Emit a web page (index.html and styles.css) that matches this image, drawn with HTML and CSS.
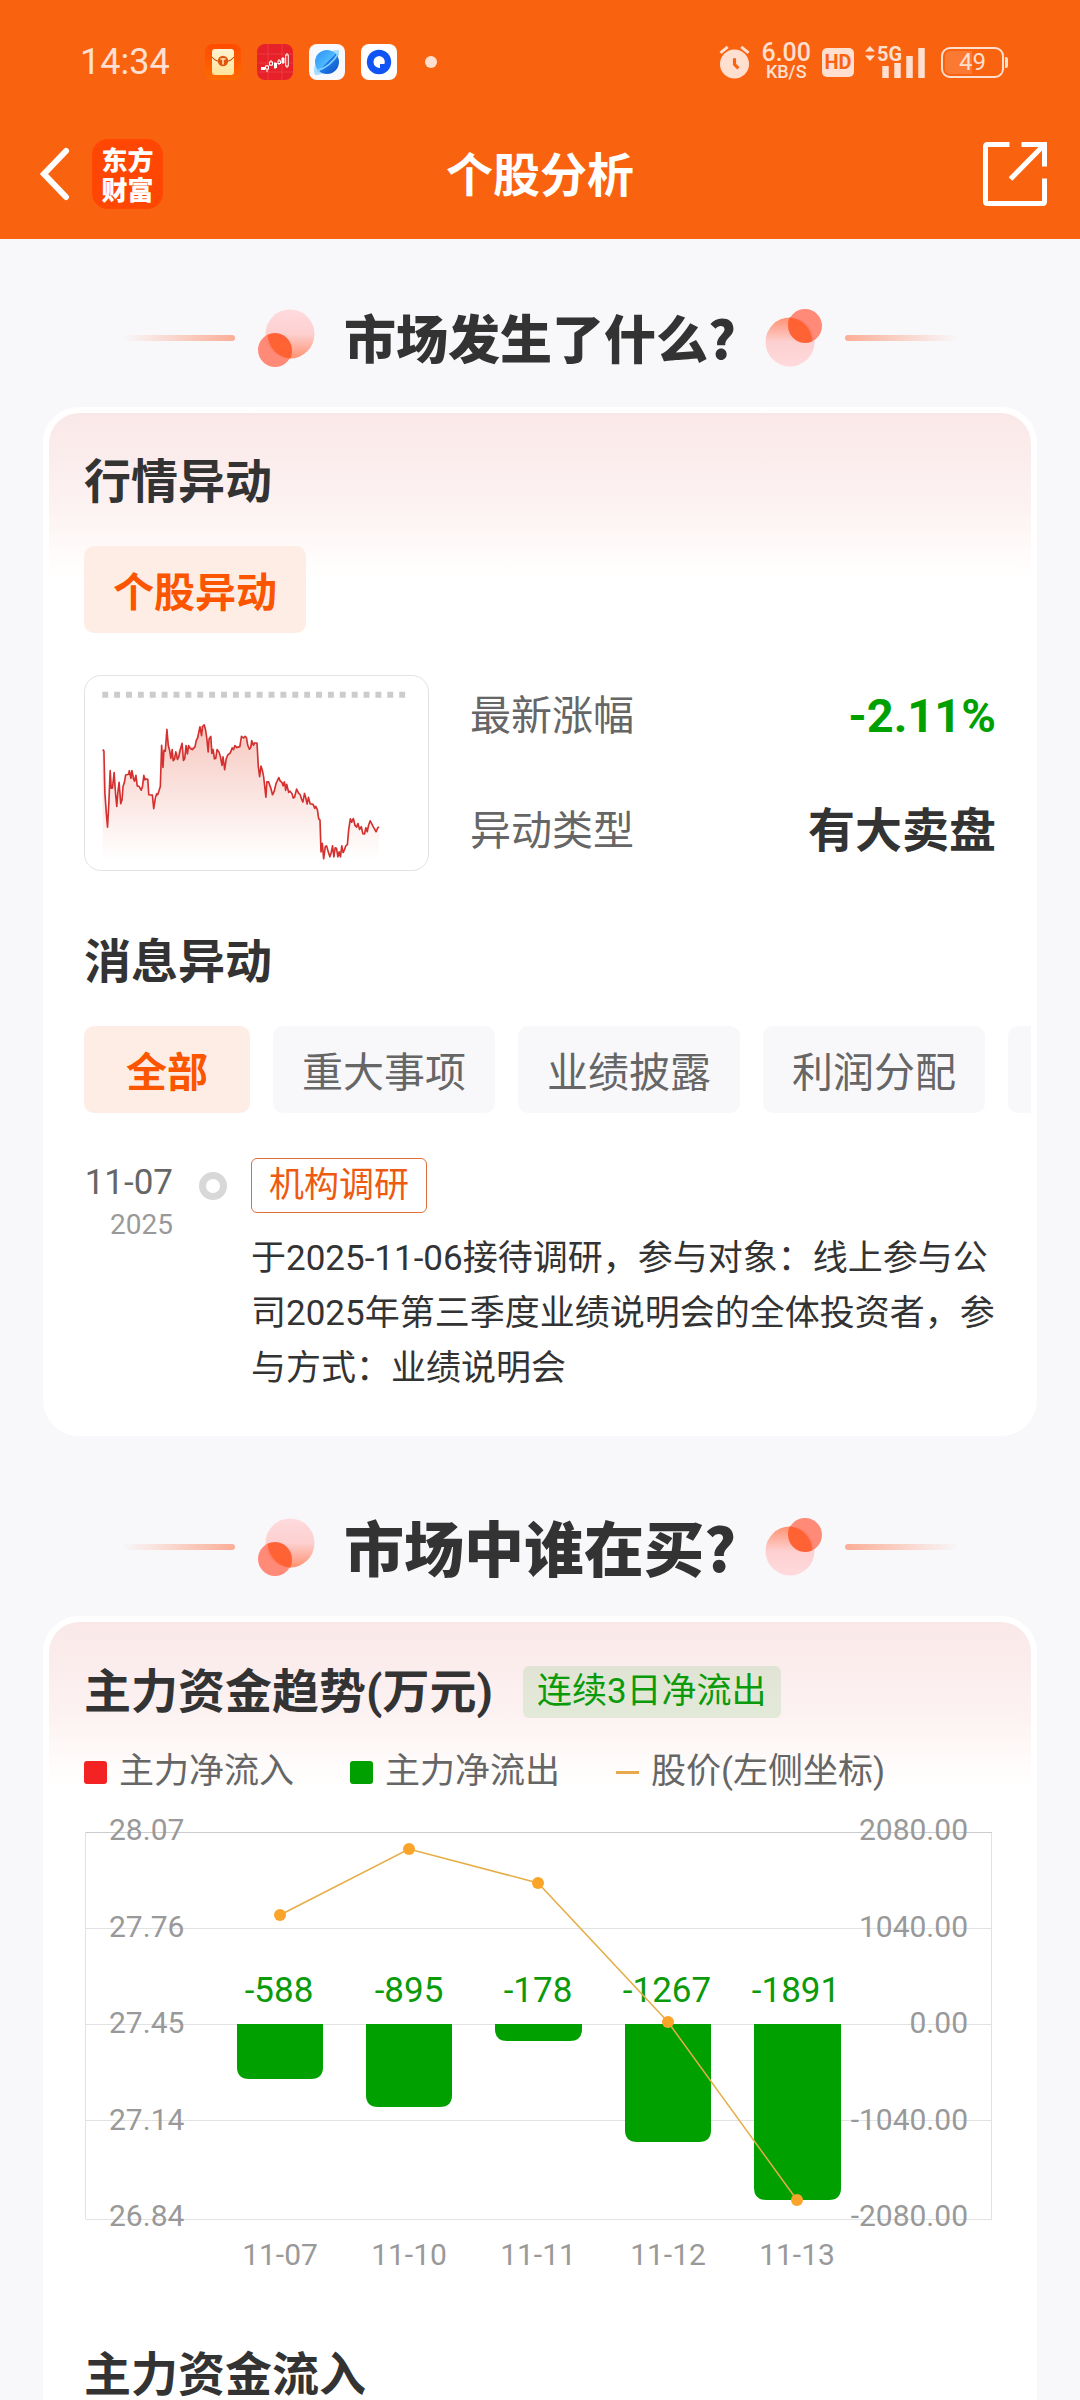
FILE: index.html
```html
<!DOCTYPE html>
<html lang="zh-CN">
<head>
<meta charset="utf-8">
<meta name="viewport" content="width=device-width, initial-scale=1">
<title>个股分析</title>
<link rel="stylesheet" href="styles.css">
</head>
<body>
<header class="header">
  <div class="status">
    <span class="status-time">14:34</span>
    <div class="status-apps">
      <svg class="app-icon" viewBox="0 0 36 36" aria-hidden="true">
        <defs>
          <linearGradient id="env" x1="0" y1="0" x2="0" y2="1"><stop offset="0" stop-color="#fff3d2"/><stop offset="1" stop-color="#ffe39a"/></linearGradient>
          <linearGradient id="envBg" x1="0" y1="0" x2="0" y2="1"><stop offset="0" stop-color="#ff4b00"/><stop offset="1" stop-color="#ff6a00"/></linearGradient>
        </defs>
        <rect width="36" height="36" rx="8" fill="url(#envBg)"/>
        <rect x="7" y="5" width="22" height="26" rx="3" fill="url(#env)"/>
        <path d="M7 13q4 5 11 5t11-5" fill="none" stroke="#c8500f" stroke-width="1.2"/>
        <circle cx="18" cy="17" r="5.2" fill="#e0560d"/>
        <path d="M15.5 15h5M18 15v5.500" stroke="#ffe9b8" stroke-width="1.5"/>
      </svg>
      <svg class="app-icon" viewBox="0 0 36 36" aria-hidden="true">
        <rect width="36" height="36" rx="8" fill="#e62129"/>
        <path d="M0 10h36M0 19h36M0 28h36M11 0v36M25 0v36" stroke="#ee4a50" stroke-width=".6"/>
        <path d="M10 21v7M14 16v6M18 18v7M22 15v6M26 13v7M30 9v15" stroke="#fff" stroke-width="1"/>
        <g fill="#fff"><rect x="4" y="23" width="4" height="3"/><rect x="17" y="19" width="3" height="5"/><rect x="24.500" y="14" width="3" height="5"/></g>
        <g fill="#e62129" stroke="#fff"><rect x="8.500" y="22" width="3" height="3"/><rect x="12.500" y="18" width="3" height="3"/><rect x="21" y="17" width="2.500" height="2.500"/><rect x="28.700" y="11" width="2.600" height="11"/></g>
      </svg>
      <svg class="app-icon" viewBox="0 0 36 36" aria-hidden="true">
        <defs><linearGradient id="globe" x1="0" y1="0" x2="1" y2="1"><stop offset="0" stop-color="#2f8ff5"/><stop offset=".5" stop-color="#4bb9ff"/><stop offset=".52" stop-color="#1f7be8"/><stop offset="1" stop-color="#0b52c4"/></linearGradient></defs>
        <rect width="36" height="36" rx="8" fill="#f7f9fc"/>
        <path d="M30 6Q22 5 12 14T6 31q9 0 17-9t7-16z" fill="#a5dcff"/>
        <circle cx="18" cy="18" r="12" fill="url(#globe)"/>
        <path d="M8 27Q22 22 29 10" fill="none" stroke="#7fd0ff" stroke-width="1.600"/>
      </svg>
      <svg class="app-icon" viewBox="0 0 36 36" aria-hidden="true">
        <rect width="36" height="36" rx="8" fill="#fff"/>
        <circle cx="18" cy="18" r="12.200" fill="#1154f5"/>
        <path d="M18 12a6 6 0 1 0 1 12v-4h4.500A6 6 0 0 0 18 12z" fill="#fff"/>
      </svg>
    </div>
    <span class="status-dot"></span>
    <div class="status-right">
      <svg class="icon-alarm" viewBox="0 0 32 36" aria-hidden="true">
        <circle cx="16" cy="20" r="15" fill="#ffdfcf"/>
        <path d="M1.500 8.500 9 2.500M30.500 8.500 23 2.500" stroke="#ffdfcf" stroke-width="3"/>
        <path d="M16 14v6.500l4 4" fill="none" stroke="#f96310" stroke-width="3.200"/>
      </svg>
      <div class="speed"><span class="speed-num">6.00</span><span class="speed-unit">KB/S</span></div>
      <span class="hd">HD</span>
      <svg class="icon-signal" viewBox="0 0 60 34" aria-hidden="true">
        <path d="M5 1l5 5.500H0zM5 16l5-5.500H0z" fill="#ffdfcf"/>
        <text x="12" y="16" class="net">5G</text>
        <path d="M20.500 21v12M32.500 18v15M44.500 11v22M56.500 3v30" stroke="#ffdfcf" stroke-width="6.500"/>
      </svg>
      <div class="battery"><span class="battery-body">49</span><span class="battery-nub"></span></div>
    </div>
  </div>
  <nav class="nav">
    <div class="nav-left">
      <a class="back" href="#" aria-label="返回">
        <svg class="icon-back" viewBox="0 0 30 54" aria-hidden="true"><path d="M26 4 4 27l22 23" fill="none" stroke="#fff" stroke-width="6" stroke-linecap="round"/></svg>
      </a>
      <a class="logo" href="#">东方<br>财富</a>
    </div>
    <h1 class="title">个股分析</h1>
    <button class="share" type="button" aria-label="分享">
      <svg class="icon-share" viewBox="0 0 64 64" aria-hidden="true">
        <g fill="none" stroke="#fff" stroke-width="5"><path d="M26.500 2.500H4.500q-2 0-2 2v55q0 2 2 2h55q2 0 2-2V36.500"/><path d="M38.500 2.500h23v22M61 3 27.500 37"/></g>
      </svg>
    </button>
  </nav>
</header>

<svg class="defs" aria-hidden="true">
  <defs>
    <linearGradient id="ball" x1="0" y1="0" x2="0" y2="1"><stop offset="0" stop-color="#ffdadd"/><stop offset=".5" stop-color="#fdd0d0"/><stop offset="1" stop-color="#ff9272"/></linearGradient>
    <symbol id="balls" viewBox="0 0 57 58">
      <circle cx="32" cy="25" r="24.500" fill="url(#ball)"/>
      <circle cx="17" cy="41" r="17" fill="#ff7a64" fill-opacity=".88"/>
      <path d="M9.700 25.700A17 17 0 0 1 33.800 41a17 17 0 0 1-1.200 8.500A24.500 24.500 0 0 1 9.700 25.700z" fill="#ff5a26" fill-opacity=".8"/>
    </symbol>
  </defs>
</svg>

<main class="main">
  <div class="section-title">
    <span class="rule rule-left"></span>
    <svg class="balls" aria-hidden="true"><use href="#balls"/></svg>
    <h2 class="section-text">市场发生了什么?</h2>
    <svg class="balls balls-flip" aria-hidden="true"><use href="#balls"/></svg>
    <span class="rule rule-right"></span>
  </div>

  <section class="card">
    <h3 class="heading">行情异动</h3>
    <div class="chips">
      <button class="chip chip-on" type="button">个股异动</button>
    </div>
    <div class="quote">
      <svg class="spark" viewBox="73 45 1035 588" role="img" aria-label="分时走势">
        <defs><linearGradient id="sparkFill" x1="0" y1="190" x2="0" y2="600" gradientUnits="userSpaceOnUse"><stop offset="0" stop-color="#f6c7bf"/><stop offset="1" stop-color="#fff"/></linearGradient></defs>
        <path d="M123 102H1042" stroke="#ccc" stroke-width="18" stroke-dasharray="18 18"/>
        <path fill="url(#sparkFill)" d="M124 600V268L131 400 139 503 147 332 167 440 174 367 179 432 194 345 213 332 229 378 241 391 249 346 261 358 264 405 275 406 279 447 299 380 303 255 307 322 319 207 331 295 346 290 365 249 369 301 377 256 404 260 419 199 432 193 444 275 452 228 463 296 471 268 494 329 503 285 525 256 540 259 551 233 560 232 569 267 576 241 592 248 600 350 604 318 619 412 627 366 639 405 658 353 679 392 702 415 712 388 731 427 736 401 744 433 762 434 775 450 783 482 786 578 794 599 803 560 821 590 845 593 866 556 875 478 884 477 898 495 918 524 935 484 953 517 962 503V600z"/>
        <polyline fill="none" stroke="#d3302f" stroke-width="5" stroke-linejoin="round" points="124,268 128,272 131,400 136,470 139,503 143,430 147,332 150,385 154,385 159,338 163,400 167,440 170,400 174,367 179,432 183,420 186,380 190,368 194,345 203,343 205,332 210,355 213,332 218,358 221,364 225,346 229,378 235,380 241,391 245,380 249,346 252,360 255,357 261,358 264,405 275,406 279,447 284,415 288,402 291,405 295,393 299,380 303,255 307,322 310,270 314,273 319,207 323,255 327,270 331,295 335,268 338,302 342,297 346,275 351,298 355,290 359,270 365,249 369,301 373,295 377,256 381,281 385,256 389,264 396,268 404,260 408,240 412,233 419,199 424,226 427,198 432,193 436,208 440,235 444,275 447,235 452,228 455,280 459,268 463,296 467,295 471,268 477,276 481,289 486,316 489,290 494,329 499,295 503,285 511,278 517,263 521,268 525,256 530,262 540,259 545,228 551,233 556,228 560,232 564,255 569,267 573,262 576,241 581,255 585,248 592,248 596,320 600,350 604,318 608,330 612,350 616,385 619,412 622,366 627,366 634,385 639,405 644,395 650,370 658,353 662,363 668,368 671,378 675,366 679,392 682,373 688,398 692,394 698,402 702,415 706,412 712,388 718,400 723,405 727,418 731,427 736,401 740,415 744,433 748,413 753,432 762,434 767,446 770,440 775,450 779,478 783,482 786,578 790,552 794,599 799,562 803,560 808,578 813,593 817,580 821,560 825,593 829,566 833,567 837,593 841,578 845,593 849,560 853,580 857,572 861,560 866,556 870,510 875,478 879,488 884,477 889,498 894,503 898,492 903,510 908,502 913,523 918,524 922,505 926,517 930,498 935,484 940,493 945,503 953,517 958,505 962,503"/>
      </svg>
      <dl class="facts">
        <div class="fact"><dt class="fact-label">最新涨幅</dt><dd class="fact-value down">-2.11%</dd></div>
        <div class="fact"><dt class="fact-label">异动类型</dt><dd class="fact-value">有大卖盘</dd></div>
      </dl>
    </div>

    <h3 class="heading heading-next">消息异动</h3>
    <div class="chips chips-scroll">
      <button class="chip chip-on chip-short" type="button">全部</button>
      <button class="chip" type="button">重大事项</button>
      <button class="chip" type="button">业绩披露</button>
      <button class="chip" type="button">利润分配</button>
      <button class="chip" type="button" aria-label="更多"></button>
    </div>
    <article class="event">
      <time class="date" datetime="2025-11-07"><span class="day">11-07</span><span class="year">2025</span></time>
      <span class="ring"></span>
      <div class="event-body">
        <span class="event-tag">机构调研</span>
        <p class="event-text">于2025-11-06接待调研，参与对象：线上参与公司2025年第三季度业绩说明会的全体投资者，参与方式：业绩说明会</p>
      </div>
    </article>
  </section>

  <div class="section-title">
    <span class="rule rule-left"></span>
    <svg class="balls" aria-hidden="true"><use href="#balls"/></svg>
    <h2 class="section-text section-text-wide">市场中谁在买?</h2>
    <svg class="balls balls-flip" aria-hidden="true"><use href="#balls"/></svg>
    <span class="rule rule-right"></span>
  </div>

  <section class="card card-open">
    <div class="heading-row">
      <h3 class="heading">主力资金趋势(万元)</h3>
      <span class="streak">连续3日净流出</span>
    </div>
    <ul class="legend">
      <li class="legend-item"><span class="key key-in"></span>主力净流入</li>
      <li class="legend-item"><span class="key key-out"></span>主力净流出</li>
      <li class="legend-item"><span class="key key-line"></span>股价(左侧坐标)</li>
    </ul>
    <svg class="chart" viewBox="0 0 912 490" role="img" aria-label="主力资金趋势">
      <g fill="none" stroke="#e2e2e2" stroke-width="1">
        <path d="M1.500 32v387M907.500 32v387"/>
        <path d="M2 128.500H908M2 224.500H908M2 320.500H908M2 419.500H908"/>
        <path d="M2 32.500H908" stroke="#ccc"/>
      </g>
      <g class="axis">
        <text x="25" y="40">28.07</text><text x="25" y="137">27.76</text><text x="25" y="233">27.45</text><text x="25" y="330">27.14</text><text x="25" y="426">26.84</text>
      </g>
      <g class="axis axis-right">
        <text x="884" y="40">2080.00</text><text x="884" y="137">1040.00</text><text x="884" y="233">0.00</text><text x="884" y="330">-1040.00</text><text x="884" y="426">-2080.00</text>
      </g>
      <g fill="#00a000">
        <path d="M153 224h86v43q0 12-12 12h-62q-12 0-12-12z"/>
        <path d="M282 224h86v71q0 12-12 12h-62q-12 0-12-12z"/>
        <path d="M411 224h87v5q0 12-12 12h-63q-12 0-12-12z"/>
        <path d="M541 224h86v106q0 12-12 12h-62q-12 0-12-12z"/>
        <path d="M670 224h87v164q0 12-12 12h-63q-12 0-12-12z"/>
      </g>
      <g class="values">
        <text x="195" y="202">-588</text><text x="325" y="202">-895</text><text x="454" y="202">-178</text><text x="583" y="202">-1267</text><text x="712" y="202">-1891</text>
      </g>
      <polyline fill="none" stroke="#e5ad45" stroke-width="1.500" points="196,115 325,49 454,83 584,222 713,400"/>
      <g fill="#fba42a">
        <circle cx="196" cy="115" r="6"/><circle cx="325" cy="49" r="6"/><circle cx="454" cy="83" r="6"/><circle cx="584" cy="222" r="6"/><circle cx="713" cy="400" r="6"/>
      </g>
      <g class="axis axis-mid">
        <text x="196" y="465">11-07</text><text x="325" y="465">11-10</text><text x="454" y="465">11-11</text><text x="584" y="465">11-12</text><text x="713" y="465">11-13</text>
      </g>
    </svg>
    <h3 class="heading heading-next">主力资金流入</h3>
  </section>
</main>
</body>
</html>
```
FILE: styles.css
```css
* {
  box-sizing: border-box;
  margin: 0;
  padding: 0;
}

body {
  display: flex;
  flex-direction: column;
  min-height: 100vh;
  background: #f8f8fb;
  color: #333;
  font-family: Roboto, "Noto Sans CJK SC", sans-serif;
}

a {
  color: inherit;
  text-decoration: none;
}

button {
  border: 0;
  background: none;
  font-family: inherit;
}

ul {
  list-style: none;
}

.defs {
  position: absolute;
  width: 0;
  height: 0;
}

/* Header */
.header {
  padding-bottom: 15px;
  background: #f96310;
  color: #fff;
}

.status {
  display: flex;
  align-items: center;
  height: 124px;
  padding: 0 72px 0 80px;
  color: #ffdfcf;
}

.status-time {
  font-size: 36px;
}

.status-apps {
  display: flex;
  gap: 16px;
  margin-left: 35px;
}

.app-icon {
  width: 36px;
  height: 36px;
}

.status-dot {
  width: 12px;
  height: 12px;
  margin-left: 28px;
  border-radius: 50%;
  background: #ffdfcf;
}

.status-right {
  display: flex;
  align-items: center;
  gap: 11px;
  margin-left: auto;
}

.icon-alarm {
  width: 31px;
  height: 36px;
}

.speed {
  display: flex;
  flex-direction: column;
  align-items: center;
  font-weight: 500;
}

.speed-num {
  font-size: 25px;
  line-height: 20px;
}

.speed-unit {
  font-size: 18px;
  line-height: 18px;
}

.hd {
  width: 32px;
  border-radius: 5px;
  background: #ffdfcf;
  color: #f96310;
  font-size: 20px;
  font-weight: 700;
  line-height: 29px;
  text-align: center;
}

.icon-signal {
  width: 60px;
  height: 34px;
}

.net {
  fill: #ffdfcf;
  font-size: 20px;
  font-weight: 700;
}

.battery {
  display: flex;
  align-items: center;
  gap: 1px;
  margin-left: 5px;
}

.battery-body {
  width: 63px;
  border: 2px solid #ffdfcf;
  border-radius: 9px;
  background: linear-gradient(90deg, #fb7a33 50%, transparent 50%) content-box;
  padding: 2px;
  font-size: 24px;
  line-height: 23px;
  text-align: center;
}

.battery-nub {
  width: 3px;
  height: 11px;
  border-radius: 0 2px 2px 0;
  background: #ffdfcf;
}

.nav {
  display: grid;
  grid-template-columns: 1fr auto 1fr;
  align-items: center;
  height: 100px;
  padding: 0 33px;
}

.nav-left {
  display: flex;
  align-items: center;
  gap: 22px;
  padding-left: 7px;
}

.icon-back {
  display: block;
  width: 30px;
  height: 54px;
}

.logo {
  width: 71px;
  padding: 5px 0;
  border-radius: 16px;
  background: #ff4602;
  font-family: "Noto Sans CJK SC", sans-serif;
  font-size: 26px;
  font-weight: 900;
  line-height: 30px;
  text-align: center;
}

.title {
  padding-top: 4px;
  font-size: 47px;
  line-height: 50px;
}

.share {
  justify-self: end;
}

.icon-share {
  display: block;
  width: 64px;
  height: 64px;
}

/* Section titles */
.main {
  display: flex;
  flex: 1;
  flex-direction: column;
  padding: 30px 43px 0;
}

.section-title {
  display: flex;
  align-items: center;
  justify-content: center;
  height: 138px;
}

.rule {
  width: 114px;
  height: 6px;
  border-radius: 3px;
}

.rule-left {
  margin-right: 23px;
  background: linear-gradient(90deg, #f8f8fb, #fbad95);
}

.rule-right {
  margin-left: 23px;
  background: linear-gradient(90deg, #fbad95, #f8f8fb);
}

.balls {
  width: 57px;
  height: 58px;
}

.balls-flip {
  transform: rotate(180deg);
}

.section-text {
  min-width: 450px;
  padding-bottom: 2px;
  font-family: "Noto Sans CJK SC", sans-serif;
  font-size: 52px;
  font-weight: 900;
  line-height: 60px;
  text-align: center;
}

.section-text-wide {
  font-size: 60px;
}

/* Cards */
.card {
  margin-bottom: 42px;
  padding: 44px 35px 34px;
  border: 6px solid #fff;
  border-radius: 36px;
  background:
    linear-gradient(#fae8e8, #fdf3f3 100px, #fffdfc 150px, #fff 170px) padding-box,
    #fff;
}

.card-open {
  flex: 1;
  margin-bottom: 0;
  padding-bottom: 0;
  border-bottom: 0;
  border-radius: 36px 36px 0 0;
}

.heading {
  font-size: 47px;
  line-height: 50px;
}

.heading-next {
  margin-top: 60px;
}

.heading-row {
  display: flex;
  align-items: center;
  gap: 30px;
}

.chips {
  display: flex;
  gap: 23px;
  margin-top: 39px;
}

.chips-scroll {
  margin-right: -35px;
  overflow: hidden;
}

.chip {
  flex: none;
  height: 87px;
  padding: 0 29px 2px;
  border-radius: 10px;
  background: #f8f8fb;
  color: #666;
  font-size: 41px;
}

.chip-on {
  background: #feede5;
  color: #fc5500;
  font-weight: 700;
}

.chip-short {
  padding: 0 42px 2px;
}

.quote {
  display: flex;
  align-items: center;
  gap: 41px;
  margin-top: 42px;
  padding-bottom: 6px;
}

.spark {
  width: 345px;
  height: 196px;
  border: 1px solid #e2e2e2;
  border-radius: 17px;
}

.facts {
  display: flex;
  flex: 1;
  flex-direction: column;
  gap: 65px;
}

.fact {
  display: flex;
  align-items: center;
  justify-content: space-between;
  line-height: 50px;
}

.fact-label {
  color: #666;
  font-size: 41px;
}

.fact-value {
  font-size: 47px;
  font-weight: 700;
}

.down {
  color: #00a000;
}

.event {
  display: flex;
  margin-top: 45px;
}

.date {
  display: flex;
  flex-direction: column;
  align-items: flex-end;
  width: 89px;
  padding-top: 4px;
}

.day {
  color: #666;
  font-size: 35px;
  line-height: 42px;
}

.year {
  color: #999;
  font-size: 28px;
  line-height: 42px;
}

.ring {
  width: 28px;
  height: 28px;
  margin: 14px 24px 0 26px;
  border: 7px solid #d8d8d8;
  border-radius: 50%;
}

.event-body {
  flex: 1;
}

.event-tag {
  display: inline-block;
  padding: 0 17px;
  border: 1px solid #dd6f3a;
  border-radius: 6px;
  color: #ee5a10;
  font-size: 35px;
  line-height: 53px;
}

.event-text {
  margin-top: 18px;
  font-size: 35px;
  line-height: 55px;
}

.streak {
  padding: 0 14px;
  border-radius: 6px;
  background: rgba(0, 160, 0, 0.1);
  color: #0a9a0a;
  font-size: 35px;
  line-height: 52px;
}

.legend {
  display: flex;
  gap: 56px;
  margin-top: 34px;
  color: #666;
  font-size: 35px;
  line-height: 40px;
}

.legend-item {
  display: flex;
  align-items: center;
  gap: 12px;
}

.key {
  width: 23px;
  height: 23px;
  border-radius: 3px;
}

.key-in {
  background: #f42323;
}

.key-out {
  background: #00a000;
}

.key-line {
  height: 3px;
  border-radius: 0;
  background: #e8a94a;
}

.chart {
  display: block;
  width: 100%;
  margin-top: 8px;
}

.axis {
  fill: #999;
  font-size: 30px;
}

.axis-right {
  text-anchor: end;
}

.axis-mid {
  text-anchor: middle;
}

.values {
  fill: #0a9a0a;
  font-size: 35px;
  text-anchor: middle;
}
```
